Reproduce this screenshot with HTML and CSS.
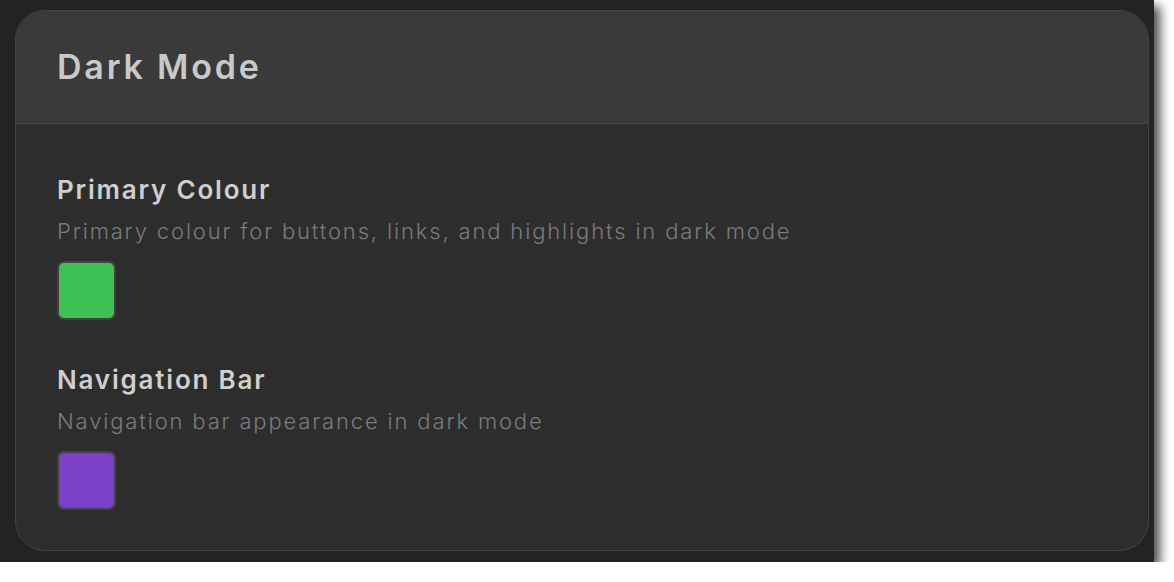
FILE: index.html
```html
<!DOCTYPE html>
<html>
<head>
<meta charset="utf-8">
<link rel="stylesheet" href="styles.css">
</head>
<body>
<div class="frame">
  <div class="card">
    <div class="card-header">
      <h1 class="card-title">Dark Mode</h1>
    </div>
    <div class="card-body">
      <div class="setting">
        <div class="setting-label">Primary Colour</div>
        <div class="setting-desc">Primary colour for buttons, links, and highlights in dark mode</div>
        <div class="swatch swatch-green"></div>
      </div>
      <div class="setting">
        <div class="setting-label">Navigation Bar</div>
        <div class="setting-desc">Navigation bar appearance in dark mode</div>
        <div class="swatch swatch-purple"></div>
      </div>
    </div>
  </div>
</div>
</body>
</html>
```
FILE: styles.css
```css
html, body {
  margin: 0;
  padding: 0;
  background: #ffffff;
}
body {
  font-family: Inter, "Noto Sans", sans-serif;
}
.frame {
  width: 1154px;
  height: 562px;
  background: #232323;
  box-shadow: 6px 6px 10px rgba(0, 0, 0, 0.7);
  padding: 10px 0 0 15px;
  box-sizing: border-box;
}
.card {
  width: 1134px;
  height: 541px;
  box-sizing: border-box;
  border: 1px solid #454545;
  border-radius: 30px;
  background: #2d2d2d;
  overflow: hidden;
}
.card-header {
  height: 113px;
  box-sizing: border-box;
  background: #3a3a3a;
  border-bottom: 1px solid #474747;
  padding: 0 41px;
  display: flex;
  align-items: center;
}
.card-title {
  margin: 0;
  font-size: 34px;
  font-weight: 600;
  letter-spacing: 2.8px;
  color: #c9c9c9;
  line-height: 40px;
}
.card-body {
  padding: 50px 41px 0;
  display: flex;
  flex-direction: column;
  gap: 44px;
}
.setting {
  display: flex;
  flex-direction: column;
}
.setting-label {
  font-size: 26px;
  font-weight: 600;
  letter-spacing: 1.8px;
  line-height: 32px;
  color: #cfcfcf;
}
.setting-desc {
  margin-top: 10px;
  font-size: 22px;
  font-weight: 300;
  letter-spacing: 1.85px;
  line-height: 30px;
  color: #7b7b7b;
}
.swatch {
  margin-top: 15px;
  width: 59px;
  height: 59px;
  box-sizing: border-box;
  border: 2px solid #424242;
  border-radius: 7px;
}
.swatch-green {
  background: #3dc155;
}
.swatch-purple {
  background: #7b3fc8;
}
```
